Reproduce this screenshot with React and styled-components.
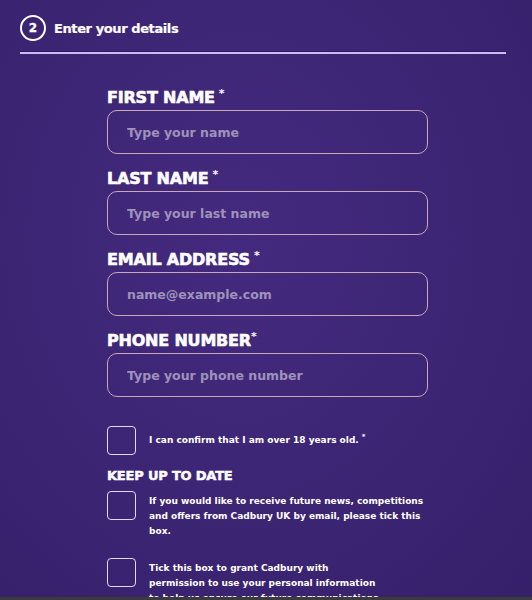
import React from 'react';
import styled, { createGlobalStyle } from 'styled-components';

const GlobalStyle = createGlobalStyle`
  html, body {
    margin: 0;
    padding: 0;
    overflow: hidden;
    background: #3a236f;
  }
  * { box-sizing: border-box; }
`;

const Page = styled.div`
  width: 532px;
  height: 600px;
  display: flex;
  flex-direction: column;
  font-family: "DejaVu Sans", "Open Sans", sans-serif;
  color: #fff;
`;

const Stage = styled.div`
  flex: 1;
  overflow: hidden;
  padding: 15px 26px 0 20px;
  background: radial-gradient(ellipse at 45% 40%, #442a7e 0%, #3e2676 45%, #35206a 100%);
`;

const Footer = styled.div`
  height: 3px;
  background: #3b3b3d;
`;

const Header = styled.div`
  display: flex;
  align-items: center;
  gap: 8px;
  height: 26px;
`;

const StepBadge = styled.div`
  width: 26px;
  height: 26px;
  border-radius: 50%;
  border: 2px solid #fff;
  display: flex;
  align-items: center;
  justify-content: center;
  font-size: 12px;
  font-weight: 700;
  -webkit-text-stroke: 0.3px #fff;
`;

const Title = styled.h2`
  margin: 0;
  font-size: 13px;
  font-weight: 700;
  letter-spacing: -0.4px;
  -webkit-text-stroke: 0.2px #fff;
`;

const Divider = styled.div`
  margin-top: 11px;
  height: 2px;
  background: #cabcf2;
  box-shadow: 0 -1px 0 #2b1a5e;
`;

const Form = styled.form`
  margin: 33px 0 0 87px;
  width: 321px;
  display: flex;
  flex-direction: column;
`;

const Field = styled.div`
  display: flex;
  flex-direction: column;
  gap: 1px;
  margin-bottom: 14px;
`;

const Label = styled.label`
  font-size: 16px;
  line-height: 22px;
  font-weight: 800;
  letter-spacing: -0.2px;
  text-transform: uppercase;
  -webkit-text-stroke: 0.6px #fff;
`;

const Req = styled.sup`
  font-size: 11px;
  margin-left: ${p => (p.$tight ? '0' : '4px')};
  vertical-align: 6px;
  line-height: 0;
  -webkit-text-stroke: 0;
`;

const Input = styled.input`
  height: 44px;
  width: 100%;
  border: 1.5px solid #c9a7b9;
  border-radius: 10px;
  background: transparent;
  padding: 0 19px;
  font-family: "DejaVu Sans", sans-serif;
  font-size: 12.5px;
  font-weight: 700;
  color: #fff;
  outline: none;
  &::placeholder { color: #9e93ba; }
`;

const Checks = styled.div`
  margin-top: 15px;
  display: flex;
  flex-direction: column;
`;

const CheckRow = styled.div`
  display: flex;
  align-items: ${p => (p.$center ? 'center' : 'flex-start')};
  gap: 13px;
  margin-bottom: ${p => p.$mb || 0}px;
`;

const Box = styled.span`
  flex: 0 0 29px;
  width: 29px;
  height: 29px;
  border: 1.5px solid #e3dbf6;
  border-radius: 4px;
`;

const CheckText = styled.p`
  margin: 0;
  padding-top: ${p => (p.$center ? 0 : 3)}px;
  max-width: ${p => p.$max || 279}px;
  font-size: 9px;
  line-height: 15px;
  font-weight: 700;
`;

const SmallReq = styled.sup`
  font-size: 7px;
  margin-left: 3px;
  vertical-align: 4px;
  line-height: 0;
`;

const Section = styled.h3`
  margin: 0 0 6px;
  font-size: 13px;
  line-height: 18px;
  font-weight: 800;
  letter-spacing: -0.2px;
  -webkit-text-stroke: 0.5px #fff;
`;

const fields = [
  { label: 'First name', ph: 'Type your name' },
  { label: 'Last name', ph: 'Type your last name' },
  { label: 'Email address', ph: 'name@example.com' },
  { label: 'Phone number', ph: 'Type your phone number', tight: true },
];

export default function App() {
  return (
    <Page>
      <GlobalStyle />
      <Stage>
        <Header>
          <StepBadge>2</StepBadge>
          <Title>Enter your details</Title>
        </Header>
        <Divider />
        <Form onSubmit={e => e.preventDefault()}>
          {fields.map(f => (
            <Field key={f.label}>
              <Label>
                {f.label}
                <Req $tight={f.tight}>*</Req>
              </Label>
              <Input placeholder={f.ph} />
            </Field>
          ))}
          <Checks>
            <CheckRow $center $mb={12}>
              <Box />
              <CheckText $center>
                I can confirm that I am over 18 years old.<SmallReq>*</SmallReq>
              </CheckText>
            </CheckRow>
            <Section>KEEP UP TO DATE</Section>
            <CheckRow $mb={19}>
              <Box />
              <CheckText>
                If you would like to receive future news, competitions and offers from Cadbury UK by email, please tick this box.
              </CheckText>
            </CheckRow>
            <CheckRow>
              <Box />
              <CheckText $max={231}>
                Tick this box to grant Cadbury with permission to use your personal information to help us ensure our future communications are relevant to you.
              </CheckText>
            </CheckRow>
          </Checks>
        </Form>
      </Stage>
      <Footer />
    </Page>
  );
}
